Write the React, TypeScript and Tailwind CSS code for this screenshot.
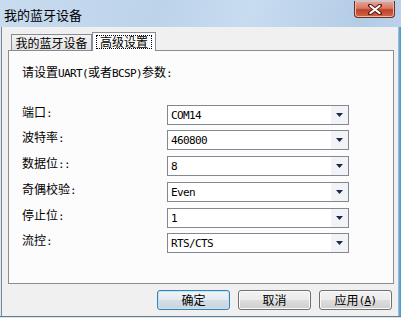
import React from 'react';

const cjk = '"Noto Sans CJK SC", "Noto Sans", sans-serif';

// SimSun-like mix: CJK glyphs at 12px, ASCII runs at half width (6px)
const Txt = ({ text }: { text: string }) => {
  const parts = text.split(/([\x00-\x7F]+)/).filter(Boolean);
  return (
    <>
      {parts.map((p, i) =>
        /^[\x00-\x7F]+$/.test(p) ? (
          <span key={i} className="font-['DejaVu_Sans_Mono',monospace] text-[11px] tracking-[-0.62px] whitespace-pre">
            {p}
          </span>
        ) : (
          <span key={i}>{p}</span>
        )
      )}
    </>
  );
};

const rows = [
  { label: '端口:', value: 'COM14', mt: 'mt-0' },
  { label: '波特率:', value: '460800', mt: 'mt-[5px]' },
  { label: '数据位::', value: '8', mt: 'mt-[6px]' },
  { label: '奇偶校验:', value: 'Even', mt: 'mt-[6px]' },
  { label: '停止位:', value: '1', mt: 'mt-[6px]' },
  { label: '流控:', value: 'RTS/CTS', mt: 'mt-[5px]' },
];

const Combo = ({ value }: { value: string }) => (
  <div className="flex h-[20px] w-[182px] items-stretch border border-[#828790] bg-white">
    <div className="flex flex-1 items-center pl-[3px] text-[12px] leading-none text-black">
      <Txt text={value} />
    </div>
    <div className="flex w-[17px] items-center justify-center bg-[#f1f3f6]">
      <svg width="7" height="4" viewBox="0 0 7 4">
        <path d="M0 0 H7 L3.5 4 Z" fill="#1c2a50" />
      </svg>
    </div>
  </div>
);

const Btn = ({ children, primary }: { children: React.ReactNode; primary?: boolean }) => (
  <button
    className={
      'flex h-[20px] w-[73px] items-center justify-center rounded-[3px] border text-[12px] leading-none text-black ' +
      (primary
        ? 'border-[#3c7fb1] bg-[linear-gradient(to_bottom,#eef3f7_0%,#e3eaf0_50%,#d3dde5_50%,#c9d5de_100%)] shadow-[inset_0_0_0_1px_#bfe6f8]'
        : 'border-[#707070] bg-[linear-gradient(to_bottom,#f2f2f2_0%,#ebebeb_50%,#dddddd_50%,#cfcfcf_100%)] shadow-[inset_0_0_0_1px_#fbfbfb]')
    }
  >
    {children}
  </button>
);

export default function App() {
  return (
    <div
      className="flex h-[318px] w-[401px] flex-col overflow-hidden bg-[linear-gradient(100deg,#c9dcef_0%,#bcd3ea_35%,#c8dcf0_55%,#b3cce6_80%,#c2d7ec_100%)]"
      style={{ fontFamily: cjk }}
    >
      {/* title bar */}
      <div className="flex h-[27px] shrink-0">
        <div className="flex items-center pl-[4px] pt-[1px] text-[13px] leading-none text-black">我的蓝牙设备</div>
        <div className="ml-auto mr-[6px] mt-[1px] flex h-[17px] w-[41px] items-center justify-center rounded-b-[4px] border border-t-0 border-[#6d2d22] bg-[linear-gradient(to_bottom,#e6a797_0%,#d67a64_45%,#c0412a_55%,#d0664c_100%)] shadow-[inset_0_0_0_1px_#efb9a8]">
          <svg width="14" height="11" viewBox="0 0 14 11">
            <path d="M2 1.5 L12 9.5 M12 1.5 L2 9.5" stroke="#5b1d14" strokeWidth="4" strokeLinecap="round" />
            <path d="M2.5 2 L11.5 9 M11.5 2 L2.5 9" stroke="#ffffff" strokeWidth="2.2" strokeLinecap="round" />
          </svg>
        </div>
      </div>

      <div className="flex flex-1">
        <div className="w-[1px] bg-[#dbe7f3]" />
        <div className="w-[1px] bg-[#7b8896]" />

        {/* client */}
        <div className="flex w-[396px] flex-col bg-[#f0f0f0] pt-[5px]">
          {/* tabs */}
          <div className="ml-[9px] flex h-[18px] items-end">
            <div className="flex h-[16px] w-[81px] items-center justify-center border border-b-0 border-[#898c95] bg-[linear-gradient(to_bottom,#f3f3f3,#e2e2e2)] text-[12px] leading-none text-black">
              我的蓝牙设备
            </div>
            <div className="relative z-10 -mb-[1px] flex h-[19px] w-[64px] items-start justify-center border border-b-0 border-[#898c95] bg-[#fcfcfc] pt-[2px]">
              <span className="border border-dotted border-black px-[3px] text-[12px] leading-[12px] text-black">高级设置</span>
            </div>
          </div>

          {/* panel */}
          <div className="ml-[6px] flex h-[234px] w-[386px] flex-col border border-[#898c95] bg-[#fcfcfc] pl-[13px]">
            <div className="mt-[14px] text-[12px] leading-[14px] text-black">
              <Txt text="请设置UART(或者BCSP)参数:" />
            </div>
            <div className="mt-[24px] flex flex-col">
              {rows.map((r) => (
                <div key={r.label} className={'grid grid-cols-[145px_182px] items-start ' + r.mt}>
                  <div className="text-[12px] leading-[14px] text-black">
                    <Txt text={r.label} />
                  </div>
                  <Combo value={r.value} />
                </div>
              ))}
            </div>
          </div>

          {/* buttons */}
          <div className="mt-[6px] flex justify-end gap-[8px] pr-[6px]">
            <Btn primary>确定</Btn>
            <Btn>取消</Btn>
            <Btn>
              应用<Txt text="(" />
              <span className="font-['DejaVu_Sans_Mono',monospace] text-[11px] tracking-[-0.62px] underline">A</span>
              <Txt text=")" />
            </Btn>
          </div>
        </div>

        <div className="w-[1px] bg-[#a9b6c3]" />
        <div className="flex-1 bg-[linear-gradient(to_right,#5ab0e0,#3f9ad6)]" />
      </div>
      <div className="h-[1px] shrink-0 bg-[#6e7a86]" />
      <div className="h-[1px] shrink-0 bg-[#d6e4f1]" />
    </div>
  );
}
